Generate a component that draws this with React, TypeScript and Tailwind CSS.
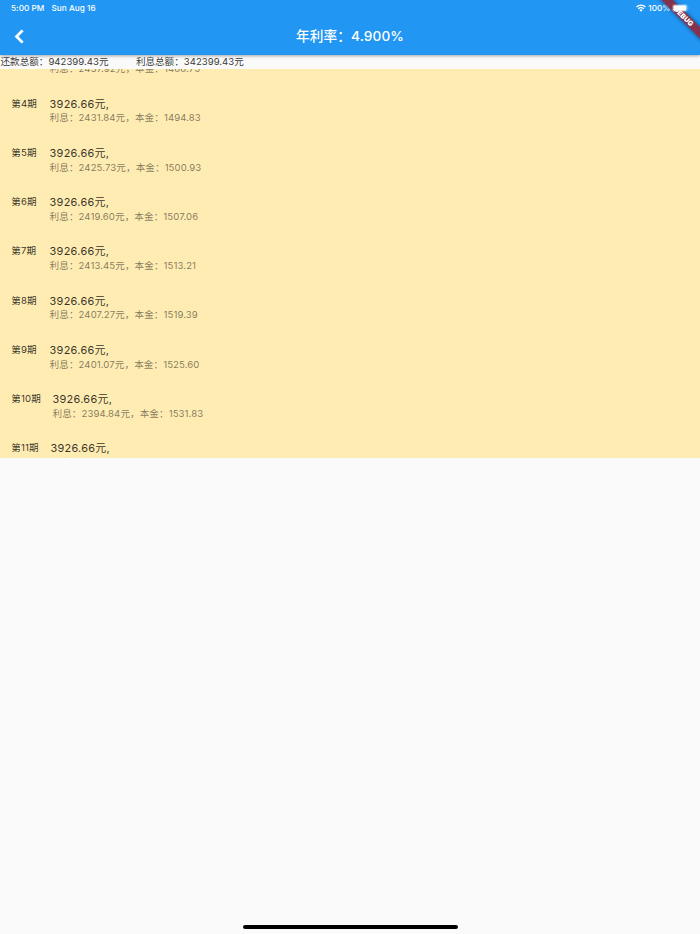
import React from 'react';

interface Payment {
  period: number;
  total: string;
  interest: string;
  principal: string;
}

const payments: Payment[] = [
  { period: 3, total: '3926.66', interest: '2437.92', principal: '1488.75' },
  { period: 4, total: '3926.66', interest: '2431.84', principal: '1494.83' },
  { period: 5, total: '3926.66', interest: '2425.73', principal: '1500.93' },
  { period: 6, total: '3926.66', interest: '2419.60', principal: '1507.06' },
  { period: 7, total: '3926.66', interest: '2413.45', principal: '1513.21' },
  { period: 8, total: '3926.66', interest: '2407.27', principal: '1519.39' },
  { period: 9, total: '3926.66', interest: '2401.07', principal: '1525.60' },
  { period: 10, total: '3926.66', interest: '2394.84', principal: '1531.83' },
  { period: 11, total: '3926.66', interest: '2388.58', principal: '1538.08' },
];

const StatusBar = () => (
  <div className="flex h-[17px] items-center justify-between px-[11px] text-[8.2px] font-medium leading-none tracking-[0.05px]">
    <div className="flex gap-[7px] whitespace-nowrap">
      <span>5:00 PM</span>
      <span>Sun Aug 16</span>
    </div>
    <div className="flex items-center">
      <svg width="10" height="8" viewBox="0 0 20 15" fill="none" stroke="currentColor" strokeWidth="2.7">
        <path d="M1 5.6C6.2.5 13.8.5 19 5.6" />
        <path d="M4.3 9.1c3.3-3.2 8.1-3.2 11.4 0" />
        <path d="M10 15l-3.2-3.5c1.8-1.8 4.6-1.8 6.4 0z" fill="currentColor" stroke="none" />
      </svg>
      <span className="ml-[2.5px]">100%</span>
      {/* Battery stays above the debug ribbon */}
      <svg className="relative z-20 ml-[1.5px]" width="17" height="8" viewBox="0 0 17 8">
        <rect x="0.4" y="0.4" width="15" height="7.2" rx="2" fill="none" stroke="white" strokeOpacity="0.4" strokeWidth="0.7" />
        <rect x="1.3" y="1.3" width="13.2" height="5.4" rx="1.2" fill="white" />
        <path d="M16 2.8q1 1.2 0 2.4z" fill="white" fillOpacity="0.5" />
      </svg>
    </div>
  </div>
);

const DebugBanner = () => (
  <svg className="absolute right-0 top-0 z-10" width="56" height="56" viewBox="0 0 56 56">
    <g transform="translate(56 0) rotate(45)">
      <rect
        x="-30"
        y="19.1"
        width="60"
        height="8.2"
        fill="#84324f"
        className="drop-shadow-[0_0_2px_rgba(0,0,0,0.5)]"
      />
      <text x="0" y="25.7" textAnchor="middle" fill="white" fontSize="7" fontWeight="900">
        DEBUG
      </text>
    </g>
  </svg>
);

const PaymentTile = ({ period, total, interest, principal }: Payment) => (
  <li className="flex h-[49.22px] shrink-0 gap-[11.6px] px-[11.2px] pt-[11px]">
    <div className="min-w-[26.8px] whitespace-nowrap text-[9.57px] leading-[14px] tracking-[0.17px] text-black/80">
      第{period}期
    </div>
    <div className="whitespace-nowrap">
      <div className="text-[10.94px] leading-[14px] tracking-[0.27px] text-black/80">{total}元,</div>
      <div className="mt-[0.7px] text-[9.57px] leading-[14px] tracking-[0.1px] text-black/50">
        利息：{interest}元，本金：{principal}
      </div>
    </div>
  </li>
);

export default function App() {
  return (
    <div
      lang="zh-CN"
      className="relative flex h-[934px] w-[700px] flex-col overflow-hidden bg-[#fafafa] font-['Inter','Noto_Sans_CJK_SC',sans-serif]"
    >
      <header className="relative z-10 h-[54.7px] shrink-0 bg-[#2196f3] text-white shadow-[0_1px_3px_rgba(0,0,0,0.35)]">
        <StatusBar />
        <div className="grid h-[38.3px] grid-cols-[39px_1fr_39px] items-center">
          <button className="flex items-center justify-center" aria-label="返回">
            <svg width="17" height="17" viewBox="0 0 24 24" fill="currentColor">
              <path d="M17.9 4.6 14.9 2 5 12l9.9 10 3-2.6L10.6 12z" />
            </svg>
          </button>
          <h1 className="pt-px text-center text-[13.67px] font-medium leading-none tracking-[0.1px]">年利率：4.900%</h1>
        </div>
        <DebugBanner />
      </header>

      <div className="flex h-[14px] shrink-0 gap-[27.4px] whitespace-nowrap pl-[0.5px] text-[9.57px] leading-[14px] tracking-[0.02px] text-black/80">
        <span>还款总额：942399.43元</span>
        <span>利息总额：342399.43元</span>
      </div>

      <div className="h-[389.6px] shrink-0 overflow-hidden bg-[#ffecb3]">
        <ul className="-mt-[32.2px] flex flex-col">
          {payments.map(payment => (
            <PaymentTile key={payment.period} {...payment} />
          ))}
        </ul>
      </div>

      {/* Home indicator */}
      <div className="mb-[5.5px] mt-auto h-[4px] w-[215px] self-center rounded-full bg-black" />
    </div>
  );
}
